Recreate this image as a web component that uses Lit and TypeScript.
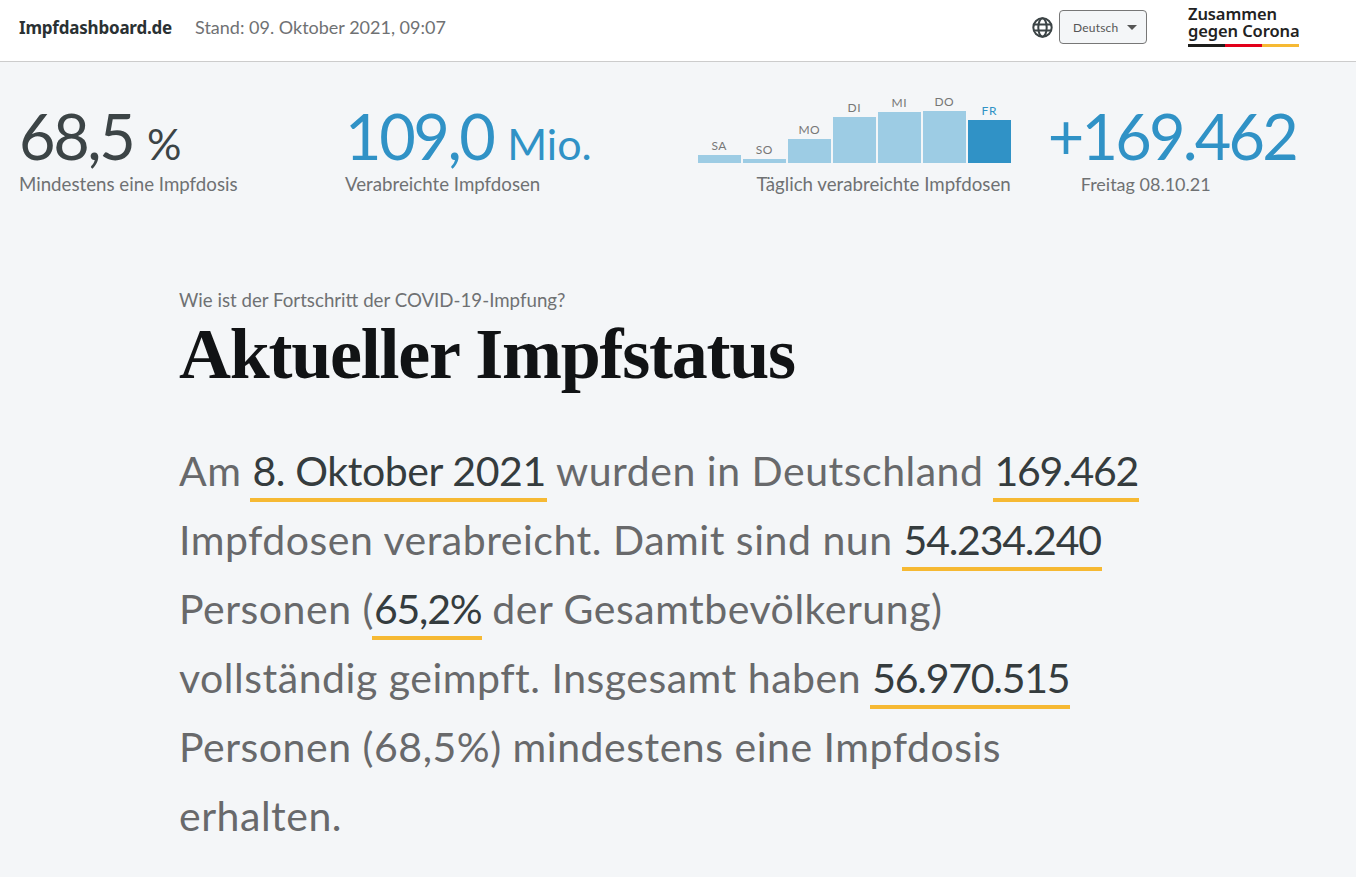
import { LitElement, html, css } from 'lit'
import { customElement } from 'lit/decorators.js'

const BARS = [
  { day: 'SA', h: 8 },
  { day: 'SO', h: 4 },
  { day: 'MO', h: 24 },
  { day: 'DI', h: 46 },
  { day: 'MI', h: 51 },
  { day: 'DO', h: 52 },
  { day: 'FR', h: 43, current: true },
]

@customElement('app-root')
export class AppRoot extends LitElement {
  static styles = css`
    :host {
      display: block;
      min-height: 877px;
      background: #f4f6f8;
      font-family: 'Lato', 'Noto Sans', sans-serif;
      color: #3c4446;
      overflow: hidden;
    }

    .topbar {
      display: flex;
      align-items: center;
      box-sizing: content-box;
      height: 54px;
      padding: 0 57px 7px 19px;
      background: #fff;
      border-bottom: 1px solid #ccc;
    }

    .brand {
      font-family: 'Noto Sans', sans-serif;
      font-size: 17px;
      font-weight: 700;
      letter-spacing: -0.2px;
      color: #2a3133;
    }

    .updated {
      margin-left: 23px;
      font-size: 18px;
      color: #6f7173;
    }

    .spacer {
      flex: 1;
    }

    .globe {
      display: block;
      width: 21px;
      height: 21px;
      margin-right: 6px;
    }

    .lang {
      display: flex;
      align-items: center;
      justify-content: space-between;
      box-sizing: border-box;
      width: 88px;
      height: 34px;
      padding: 0 9px 0 13px;
      background: #f4f6f8;
      border: 1px solid #777;
      border-radius: 4px;
      font-size: 12px;
      letter-spacing: 0.2px;
      color: #555;
    }

    .caret {
      width: 0;
      height: 0;
      border-left: 5px solid transparent;
      border-right: 5px solid transparent;
      border-top: 5px solid #555;
    }

    .logo {
      width: 111px;
      margin: 0 0 2px 41px;
      font-family: 'Noto Sans', sans-serif;
      font-size: 16.5px;
      font-weight: 600;
      line-height: 17px;
      letter-spacing: -0.1px;
      color: #222;
      white-space: nowrap;
    }

    .logo-stripe {
      display: flex;
      height: 3px;
      margin-top: 5px;
    }

    .logo-stripe i {
      flex: 1;
    }

    .stats {
      display: flex;
      align-items: flex-start;
      height: 139px;
      padding: 0 60px 0 19px;
    }

    .stat {
      display: flex;
      flex-direction: column;
      padding-top: 36px;
    }

    .stat.people {
      width: 326px;
    }

    .value {
      font-size: 63px;
      line-height: 76px;
      letter-spacing: -2.4px;
      white-space: nowrap;
    }

    .value small {
      font-size: 43px;
      line-height: 1;
      letter-spacing: 0;
    }

    .blue {
      color: #3092c6;
    }

    .label {
      font-size: 18.7px;
      line-height: 22px;
      margin-top: -1px;
      color: #6f7173;
      white-space: nowrap;
    }

    .daily {
      margin-left: auto;
      display: flex;
      flex-direction: column;
      align-items: flex-end;
      padding-top: 29px;
    }

    .chart {
      display: flex;
      align-items: flex-end;
      gap: 2px;
      height: 72px;
    }

    .bar {
      display: flex;
      flex-direction: column;
      align-items: center;
      width: 43px;
      font-size: 12px;
      letter-spacing: 0.5px;
      color: #777;
    }

    .bar i {
      display: block;
      width: 100%;
      margin-top: 2px;
      background: #9dcce4;
    }

    .bar.current {
      color: #3092c6;
    }

    .bar.current i {
      background: #3092c6;
    }

    .daily .label {
      margin-top: 10px;
    }

    .today {
      display: flex;
      flex-direction: column;
      margin-left: 37px;
      padding-top: 36px;
    }

    .today .value {
      letter-spacing: -2.8px;
    }

    .today .label {
      margin-left: 33px;
      font-size: 18px;
    }

    .content {
      padding: 87px 0 0 179px;
    }

    .eyebrow {
      font-size: 18.7px;
      line-height: 24px;
      color: #6f7173;
    }

    h1 {
      margin: 0;
      font-family: 'Liberation Serif', serif;
      font-size: 72px;
      line-height: 84px;
      font-weight: 700;
      letter-spacing: -1.25px;
      color: #111315;
      white-space: nowrap;
    }

    p {
      margin: 40px 0 0;
      max-width: 962px;
      font-size: 41px;
      line-height: 69px;
      letter-spacing: 0.52px;
      color: #68696b;
    }

    b {
      position: relative;
      font-weight: 400;
      color: #353c3e;
      letter-spacing: -0.4px;
    }

    b.num {
      letter-spacing: -1.25px;
    }

    b::after {
      content: '';
      position: absolute;
      left: -2px;
      right: -1px;
      bottom: -7px;
      height: 4px;
      background: #f6b933;
    }
  `

  render() {
    return html`
      <header class="topbar">
        <span class="brand">Impfdashboard.de</span>
        <span class="updated">Stand: 09. Oktober 2021, 09:07</span>
        <span class="spacer"></span>
        <svg class="globe" viewBox="0 0 24 24" fill="none" stroke="#3c4446" stroke-width="2.3">
          <circle cx="12" cy="12" r="10.5"></circle>
          <ellipse cx="12" cy="12" rx="4.8" ry="10.5"></ellipse>
          <path d="M2 8.5h20M2 15.5h20"></path>
        </svg>
        <div class="lang"><span>Deutsch</span><span class="caret"></span></div>
        <div class="logo">
          <div>Zusammen</div>
          <div>gegen Corona</div>
          <div class="logo-stripe">
            <i style="background:#1d1d1b"></i>
            <i style="background:#e2001a"></i>
            <i style="background:#f6b933"></i>
          </div>
        </div>
      </header>

      <section class="stats">
        <div class="stat people">
          <span class="value">68,5 <small>%</small></span>
          <span class="label">Mindestens eine Impfdosis</span>
        </div>
        <div class="stat">
          <span class="value blue">109,0 <small>Mio.</small></span>
          <span class="label">Verabreichte Impfdosen</span>
        </div>
        <div class="daily">
          <div class="chart">
            ${BARS.map((b) => html`
              <div class="bar ${b.current ? 'current' : ''}">
                <span>${b.day}</span>
                <i style="height:${b.h}px"></i>
              </div>
            `)}
          </div>
          <span class="label">Täglich verabreichte Impfdosen</span>
        </div>
        <div class="today">
          <span class="value blue">+169.462</span>
          <span class="label">Freitag 08.10.21</span>
        </div>
      </section>

      <main class="content">
        <div class="eyebrow">Wie ist der Fortschritt der COVID-19-Impfung?</div>
        <h1>Aktueller Impfstatus</h1>
        <p>
          <span>Am</span> <b>8. Oktober 2021</b> <span>wurden in Deutschland</span> <b class="num">169.462</b>
          <span>Impfdosen verabreicht. Damit sind nun</span> <b class="num">54.234.240</b>
          <span>Personen (</span><b class="num">65,2%</b> <span>der Gesamtbevölkerung)</span>
          <span>vollständig geimpft. Insgesamt haben</span> <b class="num">56.970.515</b>
          <span>Personen (68,5%) mindestens eine Impfdosis</span>
          <span>erhalten.</span>
        </p>
      </main>
    `
  }
}
